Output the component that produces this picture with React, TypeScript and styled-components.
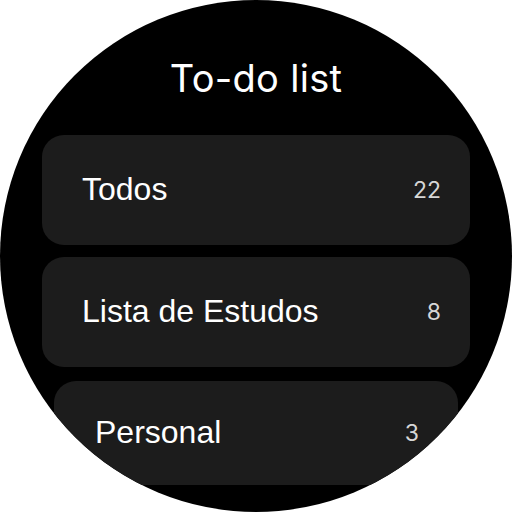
import * as React from 'react';
import styled, { createGlobalStyle } from 'styled-components';

const GlobalStyle = createGlobalStyle`
  html, body {
    margin: 0;
    padding: 0;
    background: #ffffff;
  }
  * {
    box-sizing: border-box;
  }
`

interface ListItem {
    name: string;
    count: number;
}

const lists: ListItem[] = [
    { name: 'Todos', count: 22 },
    { name: 'Lista de Estudos', count: 8 },
    { name: 'Personal', count: 3 },
];

export default function App() {
    return (
        <>
          <GlobalStyle />
          <Watch>
              <Title>To-do list</Title>
              <Column>
                  {lists.map((item, i) => (
                    <Chip key={item.name} edge={i === lists.length - 1}>
                        <ChipLabel>{item.name}</ChipLabel>
                        <ChipCount>{item.count}</ChipCount>
                    </Chip>
                  ))}
              </Column>
          </Watch>
        </>
    )
}

const Watch = styled.div`
  width: 512px;
  height: 512px;
  border-radius: 50%;
  background-color: #000000;
  overflow: hidden;
  display: flex;
  flex-direction: column;
  align-items: center;
  padding-top: 56px;
`
const Title = styled.h1`
  margin: 0;
  height: 44px;
  line-height: 44px;
  font-family: Inter, Roboto, sans-serif;
  font-size: 38px;
  font-weight: 400;
  letter-spacing: 0.3px;
  color: #ffffff;
`
const Column = styled.div`
  width: 100%;
  margin-top: 35px;
  display: flex;
  flex-direction: column;
  align-items: center;
  gap: 12px;
`
const Chip = styled.div<{ edge: boolean }>`
  width: ${(props) => (props.edge ? '404px' : '428px')};
  height: ${(props) => (props.edge ? '104px' : '110px')};
  flex-shrink: 0;
  margin-top: ${(props) => (props.edge ? '2px' : '0')};
  border-radius: 22px;
  background-color: #1c1c1c;
  display: flex;
  justify-content: space-between;
  align-items: center;
  padding: ${(props) => (props.edge ? '0 39px 0 41px' : '0 29px 0 40px')};
`
const ChipLabel = styled.span`
  font-family: 'Liberation Sans', Arial, sans-serif;
  font-size: 32px;
  color: #ffffff;
  white-space: nowrap;
  margin-top: -2px;
`
const ChipCount = styled.span`
  font-family: Inter, Roboto, sans-serif;
  font-size: 23px;
  color: #d6d6d6;
`
